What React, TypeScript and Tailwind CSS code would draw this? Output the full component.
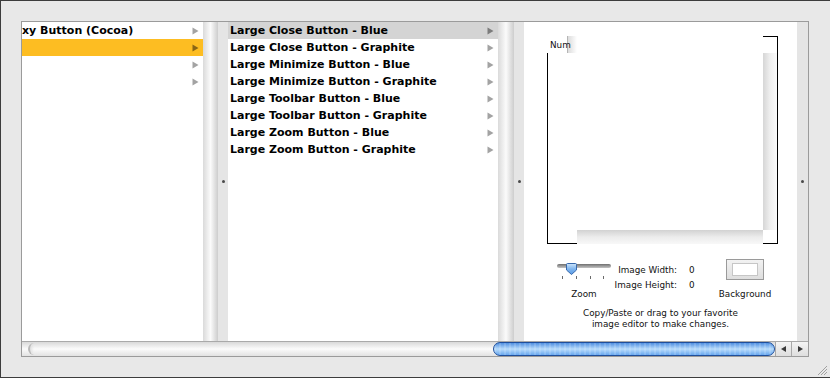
const items = [
  'Large Close Button - Blue',
  'Large Close Button - Graphite',
  'Large Minimize Button - Blue',
  'Large Minimize Button - Graphite',
  'Large Toolbar Button - Blue',
  'Large Toolbar Button - Graphite',
  'Large Zoom Button - Blue',
  'Large Zoom Button - Graphite',
];

function Arrow({ color = '#a3a3a3' }: { color?: string }) {
  return (
    <svg width="7" height="8" viewBox="0 0 7 8" className="shrink-0">
      <polygon points="0.5,0.5 6.5,4 0.5,7.5" fill={color} />
    </svg>
  );
}

function Divider({ grad }: { grad: number }) {
  return (
    <div className="flex h-full shrink-0">
      <div
        className="h-full bg-linear-to-r from-[#dadada] via-[#fbfbfb] to-[#cdcdcd]"
        style={{ width: grad }}
      />
      <div className="w-[10px] h-full bg-[#e5e5e5] flex items-center justify-center">
        <div className="w-[3px] h-[3px] rounded-full bg-[#4a4a4a]" />
      </div>
    </div>
  );
}

function Slider() {
  return (
    <svg width="56" height="22" viewBox="0 0 56 22">
      <defs>
        <linearGradient id="trk" x1="0" y1="0" x2="0" y2="1">
          <stop offset="0" stopColor="#6f6f6f" />
          <stop offset="1" stopColor="#c4c4c4" />
        </linearGradient>
        <linearGradient id="knb" x1="0" y1="0" x2="0" y2="1">
          <stop offset="0" stopColor="#cfe6fb" />
          <stop offset="0.5" stopColor="#7fb5ee" />
          <stop offset="1" stopColor="#5a9be6" />
        </linearGradient>
      </defs>
      <rect x="1" y="5" width="54" height="4" rx="2" fill="url(#trk)" />
      <path
        d="M10.5 5.5 Q10.5 4.5 11.5 4.5 H19.5 Q20.5 4.5 20.5 5.5 V11 L15.5 15.5 L10.5 11 Z"
        fill="url(#knb)"
        stroke="#3769ad"
        strokeWidth="1"
      />
      {[6.5, 20.5, 34.5, 47.5].map((x) => (
        <line key={x} x1={x} y1="17" x2={x} y2="20" stroke="#6a6a6a" strokeWidth="1" />
      ))}
    </svg>
  );
}

export default function App() {
  return (
    <div
      className="relative w-[830px] h-[378px] bg-[#e8e8e8] border-t border-l border-b border-[#3c3c3c] pt-[20px] pl-[20px] overflow-hidden"
      style={{ fontFamily: '"DejaVu Sans", sans-serif' }}
    >
      <div className="w-[788px] h-[336px] border border-[#9b9b9b] bg-white flex flex-col">
        <div className="flex h-[319px]">
          {/* column 1 */}
          <div className="w-[181px] h-full bg-white text-[11px] font-bold leading-[17px] text-black">
            <div className="flex items-center justify-between h-[17px] pr-[4px]">
              <span className="whitespace-nowrap">xy Button (Cocoa)</span>
              <Arrow />
            </div>
            <div className="flex items-center justify-end h-[17px] pr-[4px] bg-[#fdbd22]">
              <Arrow color="#8a6615" />
            </div>
            <div className="flex items-center justify-end h-[17px] pr-[4px]">
              <Arrow />
            </div>
            <div className="flex items-center justify-end h-[17px] pr-[4px]">
              <Arrow />
            </div>
          </div>
          <Divider grad={15} />
          {/* column 2 */}
          <div className="w-[270px] h-full bg-white text-[11px] font-bold leading-[17px] text-black">
            {items.map((t, i) => (
              <div
                key={t}
                className={
                  'flex items-center justify-between h-[17px] pl-[2px] pr-[4px] ' +
                  (i === 0 ? 'bg-[#d4d4d4]' : '')
                }
              >
                <span className="whitespace-nowrap">{t}</span>
                <Arrow color={i === 0 ? '#7c7c7c' : '#a3a3a3'} />
              </div>
            ))}
          </div>
          <Divider grad={16} />
          {/* column 3 */}
          <div className="w-[273px] h-full bg-white flex flex-col text-[8.8px] text-[#111]">
            <div className="relative ml-[23px] mt-[14px] w-[231px] h-[208px]">
              <div className="absolute left-[20px] top-0 w-[10px] h-[17px] border-l border-[#b5b5b5] bg-linear-to-r from-[#dcdcdc] to-white" />
              <span className="absolute z-10 left-[3px] top-[4px] leading-[11px]">Num</span>
              <div className="absolute left-[216px] top-0 w-[15px] h-px bg-black" />
              <div className="absolute left-[230px] top-0 w-px h-[208px] bg-black" />
              <div className="absolute left-0 top-[17px] w-px h-[191px] bg-black" />
              <div className="absolute left-0 top-[207px] w-[30px] h-px bg-black" />
              <div className="absolute left-[216px] top-[207px] w-[15px] h-px bg-black" />
              <div className="absolute left-[216px] top-[17px] w-[14px] h-[177px] bg-linear-to-r from-[#d6d6d6] via-[#efefef] to-[#fafafa]" />
              <div className="absolute left-[30px] top-[194px] w-[186px] h-[14px] bg-linear-to-b from-[#d2d2d2] via-[#ececec] to-[#f8f8f8]" />
            </div>
            <div className="flex mt-[15px] h-[41px]">
              <div className="ml-[32px] w-[56px] flex flex-col items-center">
                <Slider />
                <span className="mt-[8px] leading-[11px]">Zoom</span>
              </div>
              <div className="w-[65px] mt-[4px] flex flex-col items-end leading-[15px] whitespace-nowrap">
                <span>Image Width:</span>
                <span>Image Height:</span>
              </div>
              <div className="w-[49px] mt-[4px] pl-[12px] flex flex-col leading-[15px]">
                <span>0</span>
                <span>0</span>
              </div>
              <div className="w-[38px] flex flex-col items-center">
                <div className="w-[38px] h-[21px] border border-[#9a9a9a] bg-linear-to-b from-[#f2f2f2] to-[#dedede] px-[5px] py-[3px]">
                  <div className="w-full h-full bg-white border border-[#c6c6c6]" />
                </div>
                <span className="mt-[9px] leading-[11px] whitespace-nowrap">Background</span>
              </div>
            </div>
            <div className="mt-[8px] text-center leading-[11px]">
              <div>Copy/Paste or drag to your favorite</div>
              <div>image editor to make changes.</div>
            </div>
          </div>
          <div className="w-[11px] h-full bg-[#e5e5e5] flex items-center justify-center">
            <div className="w-[3px] h-[3px] rounded-full bg-[#4a4a4a]" />
          </div>
        </div>
        {/* horizontal scroller */}
        <div className="flex h-[15px] border-t border-[#a9a9a9]">
          <div className="relative flex-1 bg-linear-to-b from-[#d9d9d9] via-[#fbfbfb] to-[#e2e2e2]">
            <div className="absolute left-[6px] top-[1px] w-[6px] h-[12px] rounded-l-full border-l-2 border-[#b9b9b9] bg-linear-to-r from-[#e0e0e0] to-transparent" />
            <div className="absolute left-[471px] top-0 w-[282px] h-[14px] rounded-full border border-[#1f4f9c] bg-linear-to-b from-[#4f8fe0] via-[#b8dcfb] to-[#68a7ee]">
              <div className="w-full h-full rounded-full bg-[repeating-linear-gradient(90deg,rgba(255,255,255,0.14)_0px,rgba(255,255,255,0.14)_2px,transparent_2px,transparent_5px)]" />
            </div>
          </div>
          <div className="w-[16px] h-full border-l border-[#a9a9a9] bg-linear-to-b from-[#f4f4f4] to-[#dedede] flex items-center justify-center">
            <svg width="5" height="6" viewBox="0 0 5 6">
              <polygon points="5,0 0,3 5,6" fill="#3a3a3a" />
            </svg>
          </div>
          <div className="w-[17px] h-full border-l border-[#a9a9a9] bg-linear-to-b from-[#f4f4f4] to-[#dedede] flex items-center justify-center">
            <svg width="5" height="6" viewBox="0 0 5 6">
              <polygon points="0,0 5,3 0,6" fill="#3a3a3a" />
            </svg>
          </div>
        </div>
      </div>
      <svg className="absolute right-[2px] bottom-[1px]" width="12" height="12" viewBox="0 0 12 12">
        <line x1="11" y1="2" x2="2" y2="11" stroke="#a0a0a0" />
        <line x1="11" y1="5" x2="5" y2="11" stroke="#a0a0a0" />
        <line x1="11" y1="8" x2="8" y2="11" stroke="#a0a0a0" />
      </svg>
    </div>
  );
}
